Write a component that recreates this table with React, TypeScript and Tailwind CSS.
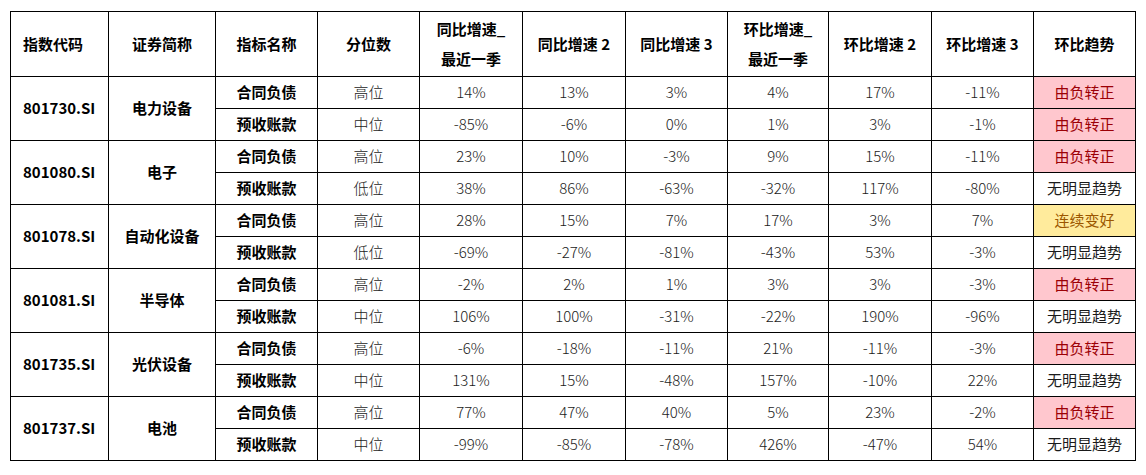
import React from 'react';

type Trend = 'up' | 'good' | 'none';

type Row = {
  name: string;
  pos: string;
  vals: string[];
  trend: Trend;
};

type Group = {
  code: string;
  short: string;
  rows: Row[];
};

const groups: Group[] = [
  {
    code: '801730.SI',
    short: '电力设备',
    rows: [
      { name: '合同负债', pos: '高位', vals: ['14%', '13%', '3%', '4%', '17%', '-11%'], trend: 'up' },
      { name: '预收账款', pos: '中位', vals: ['-85%', '-6%', '0%', '1%', '3%', '-1%'], trend: 'up' },
    ],
  },
  {
    code: '801080.SI',
    short: '电子',
    rows: [
      { name: '合同负债', pos: '高位', vals: ['23%', '10%', '-3%', '9%', '15%', '-11%'], trend: 'up' },
      { name: '预收账款', pos: '低位', vals: ['38%', '86%', '-63%', '-32%', '117%', '-80%'], trend: 'none' },
    ],
  },
  {
    code: '801078.SI',
    short: '自动化设备',
    rows: [
      { name: '合同负债', pos: '高位', vals: ['28%', '15%', '7%', '17%', '3%', '7%'], trend: 'good' },
      { name: '预收账款', pos: '低位', vals: ['-69%', '-27%', '-81%', '-43%', '53%', '-3%'], trend: 'none' },
    ],
  },
  {
    code: '801081.SI',
    short: '半导体',
    rows: [
      { name: '合同负债', pos: '高位', vals: ['-2%', '2%', '1%', '3%', '3%', '-3%'], trend: 'up' },
      { name: '预收账款', pos: '中位', vals: ['106%', '100%', '-31%', '-22%', '190%', '-96%'], trend: 'none' },
    ],
  },
  {
    code: '801735.SI',
    short: '光伏设备',
    rows: [
      { name: '合同负债', pos: '高位', vals: ['-6%', '-18%', '-11%', '21%', '-11%', '-3%'], trend: 'up' },
      { name: '预收账款', pos: '中位', vals: ['131%', '15%', '-48%', '157%', '-10%', '22%'], trend: 'none' },
    ],
  },
  {
    code: '801737.SI',
    short: '电池',
    rows: [
      { name: '合同负债', pos: '高位', vals: ['77%', '47%', '40%', '5%', '23%', '-2%'], trend: 'up' },
      { name: '预收账款', pos: '中位', vals: ['-99%', '-85%', '-78%', '426%', '-47%', '54%'], trend: 'none' },
    ],
  },
];

const trendText: Record<Trend, string> = {
  up: '由负转正',
  good: '连续变好',
  none: '无明显趋势',
};

const trendClass: Record<Trend, string> = {
  up: 'bg-[#ffc7ce] text-[#9c0006]',
  good: 'bg-[#ffeb9c] text-[#9c5700]',
  none: 'bg-white text-[#1a1a1a]',
};

const colWidths = [98, 107, 102, 102, 103, 103, 102, 101, 103, 102, 102];

const cell = 'border border-black text-center align-middle p-0';

export default function App() {
  return (
    <div className="bg-white w-[1146px] h-[475px] pt-[11px] pl-[10px] font-['Noto_Sans_CJK_SC',sans-serif] text-[15px] text-black">
      <table className="border-collapse table-fixed w-[1126px]">
        <colgroup>
          {colWidths.map((w, i) => (
            <col key={i} style={{ width: w }} />
          ))}
        </colgroup>
        <thead>
          <tr className="h-[65px] font-bold">
            <th className={`${cell} text-left pl-[12px]`}>指数代码</th>
            <th className={cell}>证券简称</th>
            <th className={cell}>指标名称</th>
            <th className={cell}>分位数</th>
            <th className={`${cell} leading-[30px]`}>
              同比增速_
              <br />
              最近一季
            </th>
            <th className={cell}>同比增速 2</th>
            <th className={cell}>同比增速 3</th>
            <th className={`${cell} leading-[30px]`}>
              环比增速_
              <br />
              最近一季
            </th>
            <th className={cell}>环比增速 2</th>
            <th className={cell}>环比增速 3</th>
            <th className={cell}>环比趋势</th>
          </tr>
        </thead>
        <tbody>
          {groups.map((g) =>
            g.rows.map((r, ri) => (
              <tr key={g.code + ri} className="h-[32px]">
                {ri === 0 && (
                  <>
                    <td rowSpan={2} className={`${cell} text-left pl-[12px] font-bold`}>
                      {g.code}
                    </td>
                    <td rowSpan={2} className={`${cell} font-bold`}>
                      {g.short}
                    </td>
                  </>
                )}
                <td className={`${cell} font-bold`}>{r.name}</td>
                <td className={`${cell} font-light text-[#1a1a1a]`}>{r.pos}</td>
                {r.vals.map((v, vi) => (
                  <td key={vi} className={`${cell} font-light text-[#1a1a1a]`}>
                    {v}
                  </td>
                ))}
                <td className={`${cell} font-normal ${trendClass[r.trend]}`}>{trendText[r.trend]}</td>
              </tr>
            ))
          )}
        </tbody>
      </table>
    </div>
  );
}
